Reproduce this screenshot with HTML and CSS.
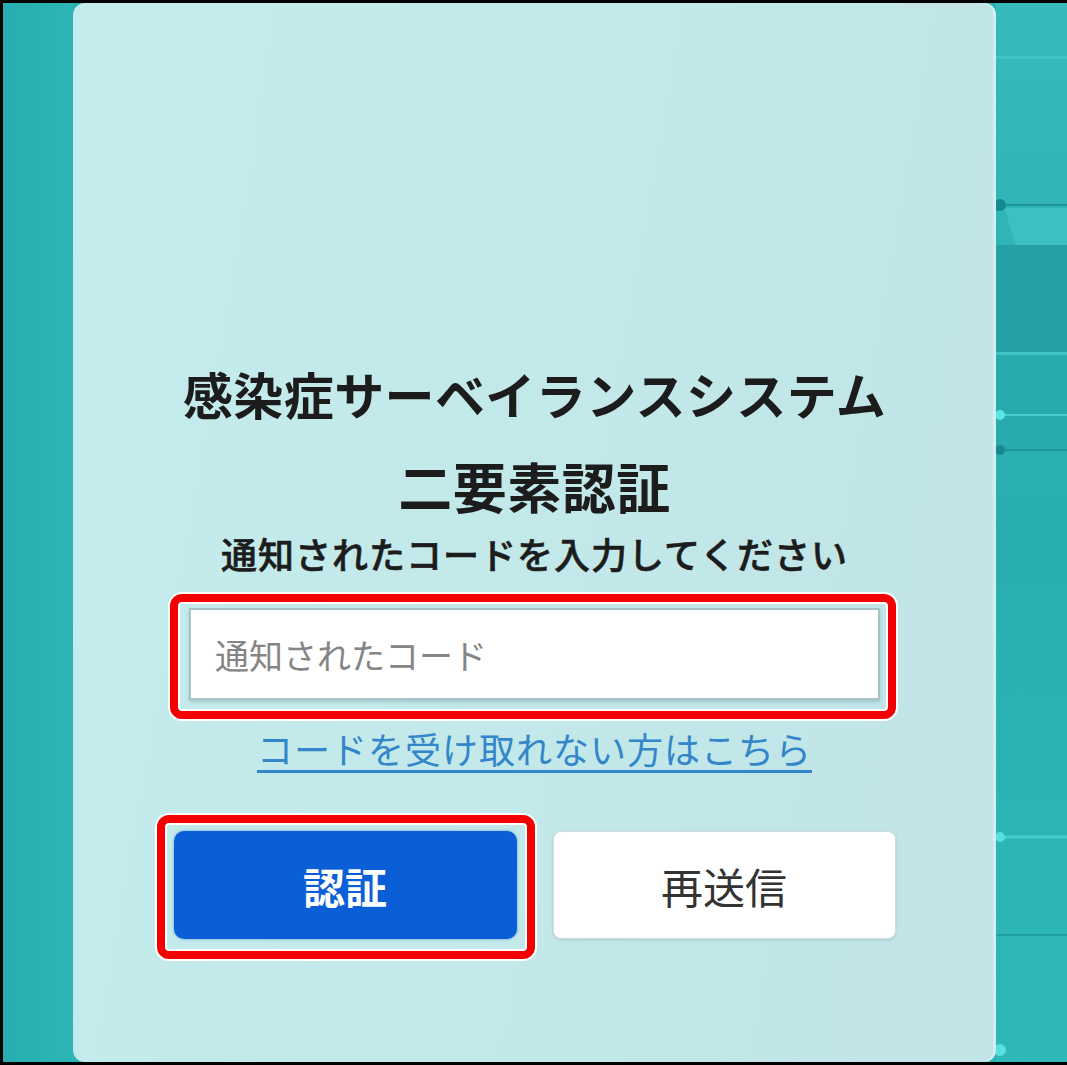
FILE: index.html
```html
<!DOCTYPE html>
<html lang="ja">
<head>
  <meta charset="UTF-8" />
  <title>二要素認証</title>
  <meta name="viewport" content="width=device-width, initial-scale=1.0" />
  <link rel="stylesheet" href="styles.css">
</head>
<body>
  <div class="frame">
    <div class="edge edge-left"></div>

    <main class="card">
      <h1 class="title">
        <span class="title-system">感染症サーベイランスシステム</span>
        <span class="title-auth">二要素認証</span>
      </h1>
      <p class="lead">通知されたコードを入力してください</p>

      <form class="code-form" id="code-form">
        <div class="field marked">
          <input type="text" class="code-input" id="code" placeholder="通知されたコード" />
        </div>

        <a href="#" class="help-link">コードを受け取れない方はこちら</a>

        <div class="actions">
          <div class="marked marked-btn">
            <button type="submit" class="btn btn-primary">認証</button>
          </div>
          <button type="button" class="btn btn-secondary">再送信</button>
        </div>
      </form>
    </main>

    <div class="edge edge-right">
      <svg class="circuit" width="71" height="1059" viewBox="0 0 71 1059">
        <defs>
          <linearGradient id="bg" x1="0" y1="0" x2="0" y2="1">
            <stop offset="0" stop-color="#36babc" />
            <stop offset="0.5" stop-color="#28aeb1" />
            <stop offset="1" stop-color="#30b8b8" />
          </linearGradient>
        </defs>
        <rect x="0" y="0" width="71" height="1059" fill="url(#bg)" />
        <rect x="0" y="53" width="71" height="3" fill="#49c7c8" opacity="0.7" />

        <polygon points="8,205 71,205 71,242 20,242" fill="#3cc0c1" />
        <rect x="0" y="242" width="71" height="107" fill="#25a0a6" />
        <line x1="4" y1="202" x2="71" y2="202" stroke="#1e9399" stroke-width="2" />
        <circle cx="4" cy="202" r="6" fill="#168990" />

        <rect x="0" y="349" width="71" height="3" fill="#40c4c5" />
        <rect x="0" y="352" width="71" height="95" fill="#28aaae" />

        <line x1="4" y1="412" x2="71" y2="412" stroke="#48cfd0" stroke-width="2" />
        <circle cx="4" cy="412" r="5" fill="#5ae6e6" />
        <line x1="4" y1="447" x2="71" y2="447" stroke="#1d959b" stroke-width="2" />
        <circle cx="4" cy="447" r="5" fill="#168990" />

        <line x1="4" y1="834" x2="71" y2="834" stroke="#45cdcd" stroke-width="3" />
        <circle cx="4" cy="834" r="5" fill="#57e0e0" />
        <line x1="0" y1="932" x2="71" y2="932" stroke="#1f9ea2" stroke-width="2" />
        <circle cx="4" cy="1047" r="6" fill="#57e0e0" />
      </svg>
    </div>
  </div>
</body>
</html>
```

FILE: styles.css
```css
:root {
  --teal: #2bb3b4;
  --card: #c4eaeb;
  --ink: #1c1c1c;
  --blue: #0b5fd6;
  --link: #3386ca;
  --mark: #f40000;
}

body {
  margin: 0;
  font-family: "Noto Sans CJK JP", "Noto Sans", sans-serif;
  background: #000;
}

.frame {
  width: 1067px;
  height: 1065px;
  box-sizing: border-box;
  border-top: 3px solid #000;
  border-left: 3px solid #000;
  border-bottom: 3px solid #000;
  display: flex;
  background: var(--teal);
}

.edge-left {
  width: 70px;
  background: linear-gradient(90deg, #28adb0, #2db5b5);
}

.edge-right {
  flex: 1;
  overflow: hidden;
}

.circuit {
  display: block;
}

.card {
  width: 923px;
  box-sizing: border-box;
  padding-top: 355px;
  border-radius: 12px;
  background: linear-gradient(100deg, #c5ecec 0%, #c2e8e9 55%, #c1e4e7 100%);
  box-shadow: inset -3px 0 0 #d2eef1;
  text-align: center;
  color: var(--ink);
}

.title {
  margin: 0;
  font-weight: 700;
}

.title-system {
  display: block;
  font-size: 50px;
  line-height: 70px;
  letter-spacing: 0.4px;
}

.title-auth {
  display: block;
  font-size: 54px;
  line-height: 95px;
  padding-top: 10px;
  letter-spacing: 0.5px;
}

.lead {
  margin: 0;
  font-size: 36px;
  line-height: 40px;
  letter-spacing: 1px;
  font-weight: 500;
  -webkit-text-stroke: 0.6px var(--ink);
}

.code-form {
  margin-top: 35px;
  display: flex;
  flex-direction: column;
  align-items: center;
}

.field {
  width: 691px;
}

.code-input {
  display: block;
  width: 100%;
  height: 92px;
  box-sizing: border-box;
  padding: 0 24px;
  border: 2px solid #a9c2c6;
  background: #fff;
  font-family: inherit;
  font-size: 34px;
  color: #333;
  box-shadow: 0 2px 3px rgba(60, 110, 120, 0.25);
}

.code-input::placeholder {
  color: #858585;
}

.help-link {
  margin-top: 26px;
  font-size: 36px;
  line-height: 44px;
  letter-spacing: 1px;
  color: var(--link);
  text-decoration: underline;
  text-underline-offset: 6px;
}

.actions {
  margin-top: 61px;
  width: 722px;
  display: flex;
  gap: 36px;
}

.btn {
  height: 108px;
  width: 343px;
  border-radius: 10px;
  font-family: inherit;
  font-size: 42px;
  cursor: pointer;
}

.marked-btn .btn {
  display: block;
}

.btn-primary {
  background: var(--blue);
  color: #fff;
  font-weight: 700;
  border: none;
  box-shadow: 0 0 3px rgba(40, 110, 220, 0.6);
}

.btn-secondary {
  background: #fff;
  color: #333;
  border: 1px solid #d2dde0;
  border-radius: 8px;
  box-shadow: 0 1px 3px rgba(0, 0, 0, 0.12);
}

/* red annotation boxes */
.marked {
  position: relative;
}

.marked::after {
  content: "";
  position: absolute;
  inset: -14px -16px -19px -19px;
  border: 8px solid var(--mark);
  border-radius: 12px;
  box-shadow: 0 0 0 2px #fff, inset 0 0 0 2px #fff;
  pointer-events: none;
}

.marked-btn::after {
  inset: -16px -18px -20px -17px;
}
```
